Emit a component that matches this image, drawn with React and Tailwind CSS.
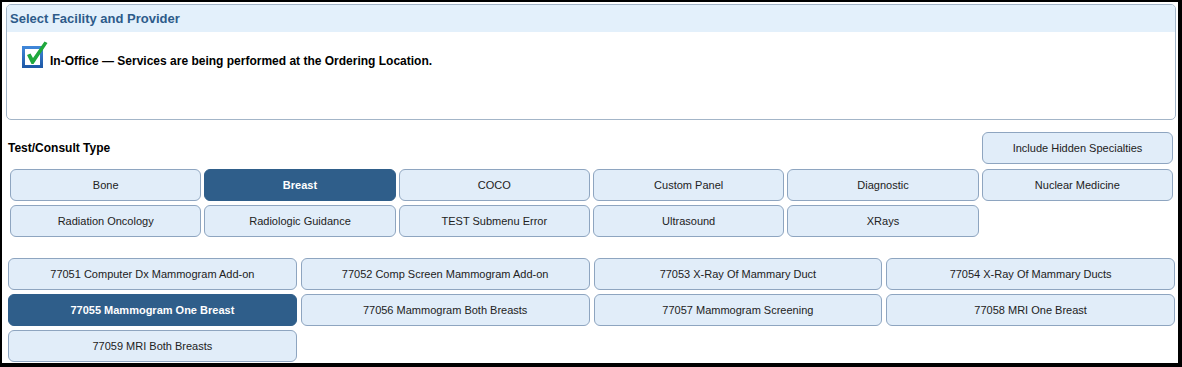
import React, { useState } from 'react';

const categories = [
    'Bone', 'Breast', 'COCO', 'Custom Panel', 'Diagnostic', 'Nuclear Medicine',
    'Radiation Oncology', 'Radiologic Guidance', 'TEST Submenu Error', 'Ultrasound', 'XRays',
];

const codes = [
    '77051 Computer Dx Mammogram Add-on',
    '77052 Comp Screen Mammogram Add-on',
    '77053 X-Ray Of Mammary Duct',
    '77054 X-Ray Of Mammary Ducts',
    '77055 Mammogram One Breast',
    '77056 Mammogram Both Breasts',
    '77057 Mammogram Screening',
    '77058 MRI One Breast',
    '77059 MRI Both Breasts',
];

const OptionButton = ({ label, selected, onClick }) => (
    <button
        type="button"
        onClick={onClick}
        className={`h-[32px] rounded-[6px] border text-[11px] leading-none ${
            selected
                ? 'bg-[#2f5e8a] border-[#2f5e8a] text-white font-bold'
                : 'bg-[#e1edf9] border-[#8ea5c0] text-[#222]'
        }`}
    >
        {label}
    </button>
);

const CheckIcon = () => (
    <svg width="26" height="28" viewBox="0 0 26 28">
        <defs>
            <linearGradient id="boxBlue" x1="0" y1="0" x2="0" y2="1">
                <stop offset="0" stopColor="#3f86d8" />
                <stop offset="1" stopColor="#1f5aa8" />
            </linearGradient>
        </defs>
        <rect x="1.5" y="6.5" width="18" height="19" fill="#fff" stroke="url(#boxBlue)" strokeWidth="3" />
        <path d="M5 14 L8.5 12.5 L11 17 L22.5 0.5 L25.5 2 L11.5 23 L9.5 23 Z" fill="#1fa83c" />
    </svg>
);

export default function App() {
    const [category, setCategory] = useState('Breast');
    const [code, setCode] = useState('77055 Mammogram One Breast');

    return (
        <div className="h-[367px] w-[1182px] bg-black pt-[2px] pl-[2px] pr-[4px] pb-[4px]" style={{ fontFamily: '"Liberation Sans", Arial, sans-serif' }}>
            <div className="h-full bg-white overflow-hidden">
                {/* Facility panel */}
                <div className="ml-[4px] mr-[2px] mt-[2px] h-[116px] rounded-[5px] border border-[#a3b5c8] overflow-hidden">
                    <div className="h-[27px] bg-[#e3f0fb] flex items-center pl-[3px] text-[13px] font-bold text-[#2d5b8a]">
                        Select Facility and Provider
                    </div>
                    <div className="flex items-start pl-[15px] pt-[9px] gap-[2px]">
                        <CheckIcon />
                        <span className="mt-[12px] text-[12px] leading-[16px] font-bold text-black">
                            In-Office — Services are being performed at the Ordering Location.
                        </span>
                    </div>
                </div>

                {/* Test/Consult Type */}
                <div className="mt-[12px] flex items-center justify-between pl-[6px] pr-[5px]">
                    <span className="text-[12px] font-bold text-black">Test/Consult Type</span>
                    <button type="button" className="w-[191px] h-[32px] rounded-[6px] border border-[#8ea5c0] bg-[#e1edf9] text-[11px] text-[#222]">
                        Include Hidden Specialties
                    </button>
                </div>

                <div className="mt-[5px] ml-[8px] mr-[5px] grid grid-cols-6 gap-x-[3px] gap-y-[4px]">
                    {categories.map((c) => (
                        <OptionButton key={c} label={c} selected={c === category} onClick={() => setCategory(c)} />
                    ))}
                </div>

                <div className="mt-[21px] ml-[6px] mr-[3px] grid grid-cols-4 gap-[4px]">
                    {codes.map((c) => (
                        <OptionButton key={c} label={c} selected={c === code} onClick={() => setCode(c)} />
                    ))}
                </div>
            </div>
        </div>
    );
}
